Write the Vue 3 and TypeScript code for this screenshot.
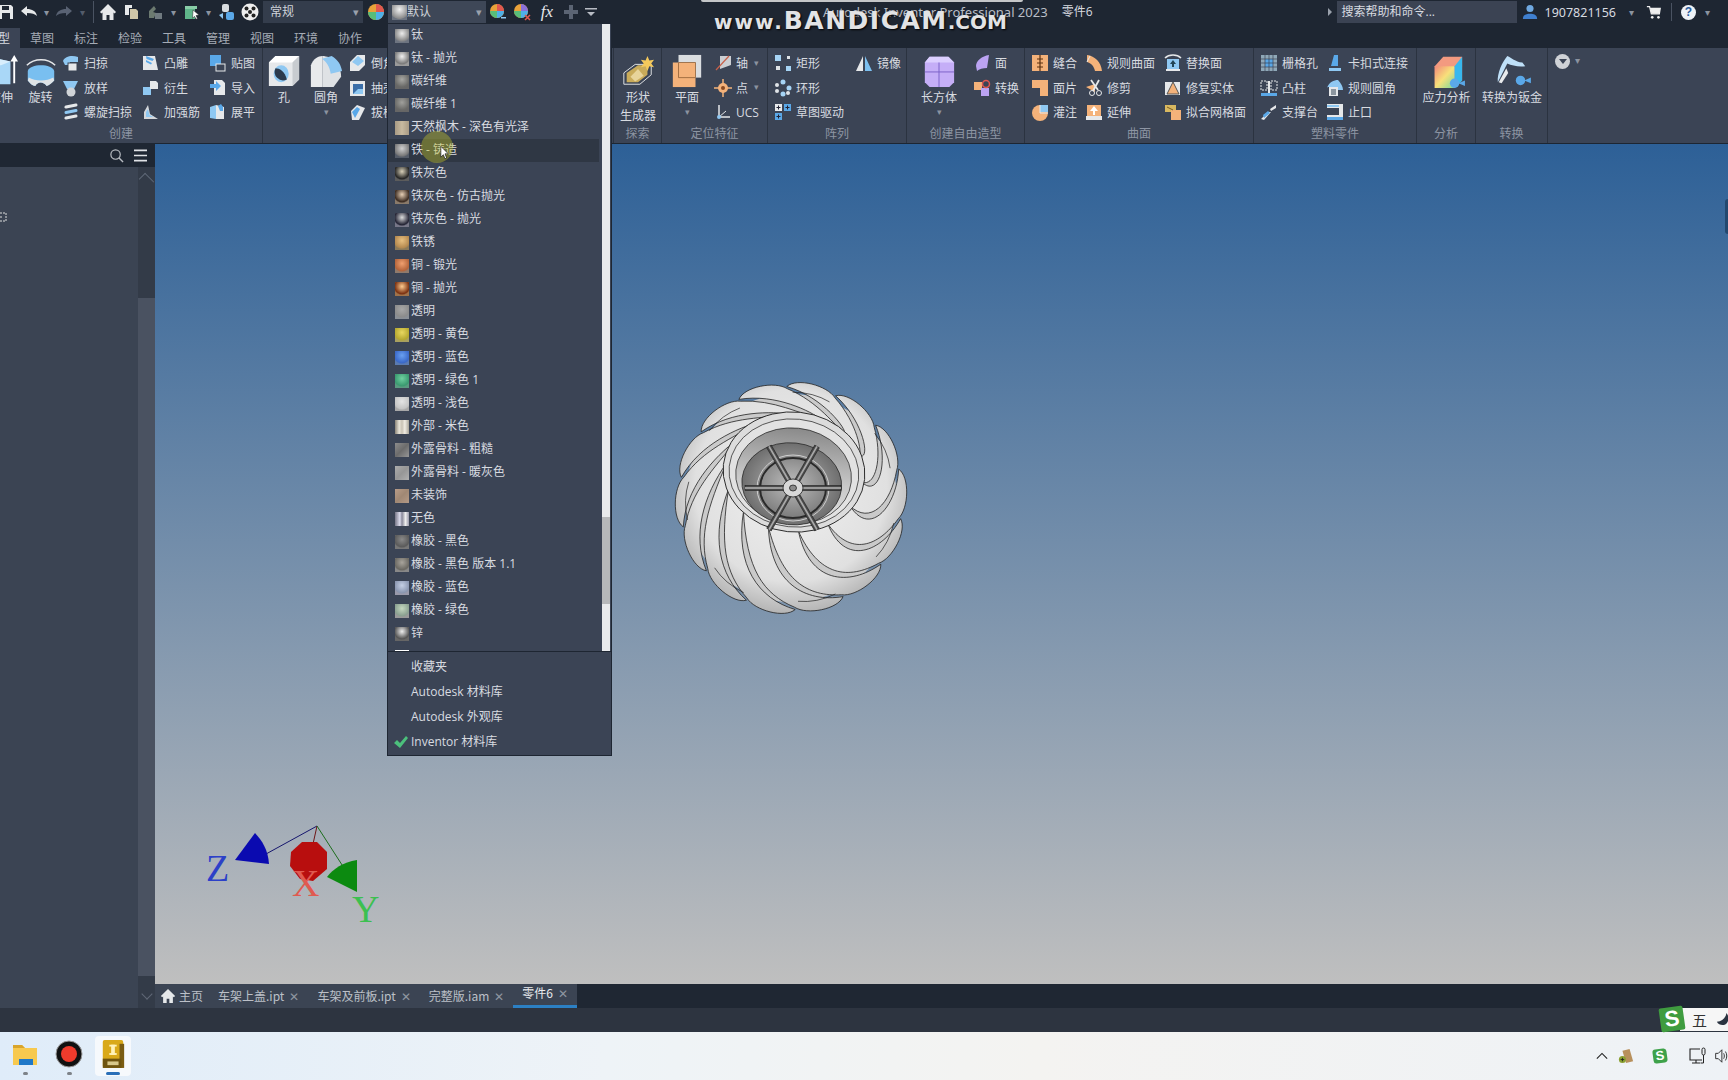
<script setup lang="ts">
import { computed } from 'vue'

type Item = { i: string; t: string; caret?: boolean }
type Col = { w: number; big?: { i: string; t: string[]; caret?: boolean }; items?: Item[]; ml?: number }
type Group = { label: string; w: number; cols: Col[]; pad?: number; labelOffset?: number }

const B = '#8fc8f2'
const W = '#e6e8ea'
const O = '#f4b27a'
const P = '#bba3f2'
const icons: Record<string, string> = {
  save: `<path d="M-4 2h14l2 2v12H-4z" fill="${W}"/><rect x="1" y="3" width="7" height="4" fill="#1f2733"/><rect x="1" y="10" width="8" height="6" fill="#1f2733"/>`,
  undo: `<path d="M1 8l6-5v3c5 0 9 2 10 7-2-2-5-3-10-3v3z" fill="${W}"/>`,
  redo: `<path d="M17 8l-6-5v3C6 6 2 8 1 13c2-2 5-3 10-3v3z" fill="#596273"/>`,
  home: `<path d="M9 1L1 9l1.400 1.400L3.500 9.500V17h4v-5h3v5h4V9.500l1.100.9L17 9z" fill="${W}"/>`,
  proj: `<path d="M2 2h7v3H6v7H2z" fill="${W}"/><path d="M7 6h6l2 2v8H7z" fill="#cfc6a8"/>`,
  upd: `<path d="M3 15V8l5-5 2 3-3 3 3 1-2 5z" fill="#6c7a70"/><path d="M9 10h7v6H9z" fill="#707a80"/>`,
  sel: `<rect x="2" y="3" width="10" height="13" fill="#5fb58a"/><path d="M2 3h12v3H2z" fill="#89cda8"/><path d="M10 7l6 5-3 .5 1.500 3-1.500.8-1.500-3-2 2z" fill="#fff" stroke="#222" stroke-width=".5"/>`,
  param: `<rect x="5" y="1" width="7" height="8" rx="2" fill="#d8dce0"/><path d="M2 12l4-2v6z" fill="#8fc8f2"/><rect x="9" y="9" width="8" height="8" rx="2" fill="#5aa8e8"/>`,
  chk: `<circle cx="9" cy="9" r="8.500" fill="#eee"/><g fill="#222"><circle cx="5.500" cy="5.500" r="2"/><circle cx="12.500" cy="5.500" r="2"/><circle cx="9" cy="9" r="2"/><circle cx="5.500" cy="12.500" r="2"/><circle cx="12.500" cy="12.500" r="2"/></g>`,
  ball: `<circle cx="9" cy="9" r="8" fill="#e9a23a"/><path d="M9 1a8 8 0 0 1 8 8H9z" fill="#e0574f"/><path d="M9 9h8a8 8 0 0 1-8 8z" fill="#4fb0e8"/><path d="M9 9v8a8 8 0 0 1-8-8z" fill="#58bd7a"/>`,
  balladd: `<circle cx="8" cy="8" r="7" fill="#e9a23a"/><path d="M8 1a7 7 0 0 1 7 7H8z" fill="#e0574f"/><path d="M8 8h7a7 7 0 0 1-7 7z" fill="#4fb0e8"/><path d="M8 8v7a7 7 0 0 1-7-7z" fill="#58bd7a"/><path d="M12 14h5v1.500h-5z" fill="#8fc8f2"/>`,
  balldel: `<circle cx="8" cy="8" r="7" fill="#e9a23a"/><path d="M8 1a7 7 0 0 1 7 7H8z" fill="#8a70d8"/><path d="M8 8h7a7 7 0 0 1-7 7z" fill="#4fb0e8"/><path d="M8 8v7a7 7 0 0 1-7-7z" fill="#58bd7a"/><path d="M12 12l5 5m0-5l-5 5" stroke="#e0574f" stroke-width="1.500"/>`,
  plus: `<path d="M7 2h4v5h5v4h-5v5H7v-5H2V7h5z" fill="#5b6473"/>`,
  more: `<path d="M3 5h12v1.500H3zM5 9h8l-4 4z" fill="#b8bcc4"/>`,
  sweep: `<path d="M1 7C3 2 10 1 16 3v5H8v3H3z" fill="${B}"/><rect x="6" y="9" width="9" height="8" fill="${W}" stroke="#3b4455"/>`,
  loft: `<path d="M1 2h15l-4 8H5z" fill="${B}"/><circle cx="9" cy="13" r="4.500" fill="#d0d4d8"/>`,
  coil: `<g stroke="${W}" stroke-width="3" fill="none" stroke-linecap="round"><path d="M4 4l10-2"/><path d="M4 9.500l10-2" stroke="${B}"/><path d="M4 15l10-2"/></g>`,
  emboss: `<path d="M1 2h12l3 14H1z" fill="${W}"/><path d="M4 2l8 3-1.500 2-6-2zM4 6l6 3-1 1.500-5-2.500z" fill="#5aa8e8"/>`,
  derive: `<rect x="1" y="8" width="8" height="8" fill="${B}"/><path d="M8 2h6l2 2v6H8z" fill="${W}"/>`,
  rib: `<path d="M2 16V9L6 2l2 9 8 5z" fill="${W}" opacity=".9"/><path d="M4 14V9l2-3 1.500 6 4 2z" fill="${B}"/>`,
  decal: `<rect x="1" y="1" width="11" height="11" fill="#5aa8e8"/><rect x="7" y="10" width="9" height="7" fill="#3b4455" stroke="${W}"/>`,
  imp: `<path d="M5 1h8l3 3v12H5z" fill="${W}"/><path d="M1 5h6V2l5 5-5 5V9H1z" fill="#5aa8e8"/>`,
  unfold: `<path d="M1 4l6-2v14l-6-1z" fill="${B}"/><path d="M7 2l8 2v12l-8 0z" fill="${W}"/><path d="M9 3l3-2 2 3v4h-3z" fill="#5aa8e8"/>`,
  chamfer: `<path d="M1 8l7-7h8v10l-6 6H1z" fill="${W}"/><path d="M3 8l6-6 6 5-6 5z" fill="${B}"/>`,
  shell: `<rect x="1" y="2" width="15" height="15" fill="${W}"/><rect x="4" y="5" width="10" height="10" fill="#3b6ea8"/><path d="M4 15l5-5h5v5z" fill="${B}"/>`,
  draft: `<path d="M2 8l6-6 8 3-6 12H3z" fill="${W}"/><path d="M3 9l5-5 3 2-5 9z" fill="#5aa8e8"/>`,
  axis: `<path d="M6 2h11v9L6 15z" fill="${W}" opacity=".85"/><path d="M15 2L2 16" stroke="#c8614a" stroke-width="1.200"/>`,
  point: `<path d="M9 0v18M0 9h18" stroke="${O}" stroke-width="1.500"/><circle cx="9" cy="9" r="5" fill="${O}"/><circle cx="9" cy="9" r="2" fill="#8a4a20"/>`,
  ucs: `<path d="M5 2v12h11" fill="none" stroke="${W}" stroke-width="1.500"/><path d="M5 14l7-6" stroke="${W}"/><circle cx="5" cy="14" r="2" fill="${B}"/>`,
  rect: `<g fill="#a6d4f5"><rect x="1" y="1" width="6" height="6"/><rect x="12" y="12" width="5" height="5"/></g><g fill="#dfe3e6"><rect x="13" y="2" width="3" height="3"/><rect x="2" y="12" width="4" height="4"/></g>`,
  ring: `<g fill="#a6d4f5"><circle cx="9" cy="3" r="2.500"/><circle cx="15" cy="9" r="2.500"/><circle cx="9" cy="15" r="2.500"/></g><g fill="#e0e4e8"><circle cx="3" cy="6" r="2"/><circle cx="3" cy="12" r="2"/><circle cx="14" cy="14" r="2"/></g>`,
  sketch: `<g fill="#e8eaec"><rect x="1" y="1" width="7" height="7"/></g><g fill="#5aa8e8"><rect x="10" y="1" width="7" height="7"/><rect x="1" y="10" width="7" height="7"/></g><path d="M4.500 2.500v4M2.500 4.500h4M13.500 2.500v4M11.500 4.500h4M4.500 11.500v4M2.500 13.500h4" stroke="#223" />`,
  mirror: `<path d="M8 2v15H1z" fill="${W}"/><path d="M10 2v15h7z" fill="#7cc0f0"/>`,
  face: `<path d="M3 12C3 7 9 2 16 1l-2 13c-4 0-8 1-10 3z" fill="${P}"/>`,
  convert: `<rect x="1" y="3" width="8" height="8" fill="${O}"/><rect x="8" y="9" width="8" height="8" fill="${P}"/><circle cx="13" cy="5" r="3.500" fill="none" stroke="#e0574f" stroke-width="1.500"/>`,
  stitch: `<rect x="1" y="1" width="16" height="16" fill="${O}"/><path d="M9 1v16M6 5h6M6 9h6M6 13h6" stroke="#5a3010" stroke-width="1.200"/>`,
  patch: `<path d="M1 1h16v16H9V9H1z" fill="${O}"/>`,
  sculpt: `<circle cx="9" cy="10" r="8" fill="${O}"/><path d="M9 2l8 0v7H9z" fill="${B}"/><path d="M9 2v8h8" fill="none" stroke="${W}"/>`,
  ruled: `<path d="M2 1c8 1 14 7 15 16h-7C9 12 6 9 2 8z" fill="${O}"/><path d="M5 2l-3 6" stroke="${W}"/>`,
  trim: `<path d="M1 8l9-3v8z" fill="${O}"/><path d="M14 1L8 12M6 1l7 10" stroke="${W}" stroke-width="1.800"/><circle cx="7" cy="14" r="2.500" fill="none" stroke="${W}"/><circle cx="14" cy="14" r="2.500" fill="none" stroke="${W}"/>`,
  extend: `<rect x="1" y="13" width="16" height="4" fill="${W}"/><rect x="2" y="2" width="14" height="11" fill="${O}"/><path d="M9 3l4 5h-3v4H8V8H5z" fill="#fff"/>`,
  replace: `<path d="M1 4c4-4 12-4 16 0" fill="none" stroke="${W}" stroke-width="1.500"/><rect x="3" y="5" width="12" height="10" fill="${B}"/><path d="M9 6l3 4h-2v3H8v-3H6z" fill="#245"/><rect x="2" y="15" width="14" height="2" fill="${W}"/>`,
  repair: `<rect x="1" y="3" width="15" height="13" fill="${W}"/><path d="M9 3l6 12H3z" fill="${O}" stroke="#555"/>`,
  mesh: `<path d="M1 2h11v7H1z" fill="#d8b860"/><path d="M7 7h10v10H7z" fill="${O}"/><path d="M3 4l6 3" stroke="#7a5a20"/>`,
  grill: `<rect x="1" y="1" width="16" height="16" fill="#8fa8b8"/><rect x="5" y="5" width="8" height="8" fill="#5aa8e8"/><path d="M1 5h16M1 9h16M1 13h16M5 1v16M9 1v16M13 1v16" stroke="#3b4455" stroke-width=".7"/>`,
  boss: `<path d="M1 2h6v9H1zM11 2h6v9h-6z" fill="none" stroke="${W}" stroke-dasharray="2 1"/><rect x="8" y="2" width="2" height="12" fill="${W}"/><rect x="1" y="14" width="16" height="3" fill="#5aa8e8"/>`,
  rest: `<path d="M1 16l7-7h3L4 17zM10 6l6-4v3l-5 3z" fill="${W}"/><path d="M3 12l5-4 2 2-6 5z" fill="#5aa8e8"/>`,
  snap: `<path d="M8 1h4v11H5z" fill="#5aa8e8"/><rect x="3" y="14" width="12" height="3" fill="${B}"/>`,
  rfillet: `<path d="M1 9C3 3 8 1 12 1c3 3 5 7 5 10h-6V8H1z" fill="${B}"/><rect x="3" y="8" width="9" height="9" fill="${W}"/><path d="M5 11h5M5 13h5M5 15h5" stroke="#345"/>`,
  lip: `<path d="M1 1h16v14H1v-3h12V5H1z" fill="${W}"/><rect x="1" y="14" width="16" height="3" fill="#5aa8e8"/><rect x="1" y="2" width="12" height="2" fill="#8fc8f2"/>`,
  extrude: `<path d="M0 10l10-6 18 4v24H0z" fill="#a9d7f7"/><path d="M0 10l10-6 18 4-10 4z" fill="#d8eefc"/><path d="M32 1l4 7h-3v23h-2V8h-3z" fill="#fff"/>`,
  revolve: `<path d="M4 18C6 10 30 10 32 18v10c-5 5-7 5-8 6-3-5-10-5-12 0-3-1-5-2-8-6z" fill="#79bff0"/><path d="M4 28c3 4 5 5 8 6 2-5 9-5 12 0 3-1 5-3 8-6l-1-3c-7 4-19 4-26 0z" fill="#dfe3e6"/><path d="M3 12c8-8 22-8 30 0" fill="none" stroke="#e6e8ea" stroke-width="1.500"/>`,
  hole: `<path d="M2 9l7-7h25v25l-7 7H2z" fill="${W}"/><path d="M9 2h25l-7 7H2z" fill="#fff"/><path d="M27 9l7-7v25l-7 7z" fill="#c8ccd0"/><ellipse cx="15" cy="21" rx="8" ry="9" fill="${B}"/><path d="M9 15c4 0 10 3 12 12A9 9 0 0 1 9 15z" fill="#2c3a4c"/>`,
  fillet: `<path d="M2 12C4 5 10 2 14 2v33H2z" fill="#e8eaec"/><path d="M14 2c10 0 20 9 20 22l-8 11H14z" fill="#dfe2e5"/><path d="M14 5l10-3c7 4 10 10 11 16l-12 3C22 13 18 8 14 5z" fill="${B}"/>`,
  shape: `<path d="M3 20l12-9h17v11L20 32H3z" fill="none" stroke="${W}"/><path d="M6 20l12-8h10v10L18 30H6z" fill="#c9ab5a"/><path d="M10 24l8-8 6 7-9 6z" fill="#e8d49a"/><path d="M28 2l2 5 5-1-3 4 3 4-5-1-2 5-2-5-5 1 3-4-3-4 5 1z" fill="#f4c95c"/>`,
  plane: `<rect x="9" y="1" width="24" height="24" fill="#dadde0"/><rect x="3" y="9" width="24" height="26" fill="${O}"/><path d="M9 9h18v16H9z" fill="none" stroke="#8a5a30" stroke-width=".8"/>`,
  box: `<path d="M8 3h20l6 6v21l-5 5H8l-5-5V9z" fill="#c5aef7"/><path d="M3 9l5-6h20l6 6z" fill="#dccfff"/><path d="M3 19h31M18 9v26" stroke="#7a60c8"/>`,
  stress: `<path d="M5 13L14 3h20v25l-8 8H5z" fill="#f39a80"/><path d="M5 13h21v23H5z" fill="url(#stressG)"/><path d="M26 13l8-10v25l-8 8z" fill="#38b8ee"/><circle cx="26" cy="31" r="5" fill="#5aa8e8"/><path d="M30 31l7-3v6z" fill="#5aa8e8"/>`,
  sheet: `<path d="M3 30C2 20 8 8 13 2c5 2 8 6 16 7l3 4c-8 1-14-1-19-3z" fill="#bfe0f8"/><path d="M4 30l8-15 2 5-7 11z" fill="#e8eaec"/><circle cx="27" cy="28" r="5" fill="#5aa8e8"/><path d="M31 28l7-3v6z" fill="#5aa8e8"/>`,
}

const qat: { i?: string; w: number; kind?: string; text?: string }[] = [
  { i: 'save', w: 19 }, { i: 'undo', w: 20 }, { kind: 'caret', w: 14 }, { i: 'redo', w: 22 }, { kind: 'caretDim', w: 15 },
  { kind: 'sep', w: 7 }, { i: 'home', w: 22 }, { kind: 'gap', w: 2 }, { i: 'proj', w: 22 }, { kind: 'gap', w: 1 }, { i: 'upd', w: 22 }, { kind: 'caret', w: 14 },
  { kind: 'gap', w: 1 }, { i: 'sel', w: 22 }, { kind: 'caret', w: 11 }, { kind: 'gap', w: 1 }, { i: 'param', w: 22 }, { kind: 'gap', w: 2 }, { i: 'chk', w: 22 }, { kind: 'gap', w: 2 },
  { kind: 'dd', w: 100, text: '常规' }, { i: 'ball', w: 25 },
]
const qatEnd = [{ i: 'balladd', w: 24 }, { i: 'balldel', w: 24 }]

const tabs = ['草图', '标注', '检验', '工具', '管理', '视图', '环境', '协作', 'F']

const col3 = (w: number, a: Item, b?: Item, c?: Item): Col => ({ w, items: [a, b, c].filter(Boolean) as Item[] })
const groups: Group[] = [
  { label: '创建', w: 263, labelOffset: 109, cols: [
    { w: 40, ml: -19, big: { i: 'extrude', t: ['拉伸'] } },
    { w: 39, big: { i: 'revolve', t: ['旋转'] } },
    col3(80, { i: 'sweep', t: '扫掠' }, { i: 'loft', t: '放样' }, { i: 'coil', t: '螺旋扫掠' }),
    col3(67, { i: 'emboss', t: '凸雕' }, { i: 'derive', t: '衍生' }, { i: 'rib', t: '加强筋' }),
    col3(56, { i: 'decal', t: '贴图' }, { i: 'imp', t: '导入' }, { i: 'unfold', t: '展平' }),
  ] },
  { label: '', w: 351, cols: [
    { w: 42, big: { i: 'hole', t: ['孔'] } },
    { w: 42, big: { i: 'fillet', t: ['圆角'], caret: true } },
    col3(80, { i: 'chamfer', t: '倒角' }, { i: 'shell', t: '抽壳' }, { i: 'draft', t: '拔模' }),
  ] },
  { label: '探索', w: 48, cols: [{ w: 48, big: { i: 'shape', t: ['形状', '生成器'] } }] },
  { label: '定位特征', w: 106, cols: [
    { w: 50, big: { i: 'plane', t: ['平面'], caret: true } },
    col3(56, { i: 'axis', t: '轴', caret: true }, { i: 'point', t: '点', caret: true }, { i: 'ucs', t: 'UCS' }),
  ] },
  { label: '阵列', w: 139, pad: 4, cols: [
    col3(81, { i: 'rect', t: '矩形' }, { i: 'ring', t: '环形' }, { i: 'sketch', t: '草图驱动' }),
    col3(54, { i: 'mirror', t: '镜像' }),
  ] },
  { label: '创建自由造型', w: 118, cols: [
    { w: 64, big: { i: 'box', t: ['长方体'], caret: true } },
    col3(54, { i: 'face', t: '面' }, { i: 'convert', t: '转换' }),
  ] },
  { label: '曲面', w: 229, pad: 4, cols: [
    col3(54, { i: 'stitch', t: '缝合' }, { i: 'patch', t: '面片' }, { i: 'sculpt', t: '灌注' }),
    col3(79, { i: 'ruled', t: '规则曲面' }, { i: 'trim', t: '修剪' }, { i: 'extend', t: '延伸' }),
    col3(90, { i: 'replace', t: '替换面' }, { i: 'repair', t: '修复实体' }, { i: 'mesh', t: '拟合网格面' }),
  ] },
  { label: '塑料零件', w: 163, pad: 4, cols: [
    col3(66, { i: 'grill', t: '栅格孔' }, { i: 'boss', t: '凸柱' }, { i: 'rest', t: '支撑台' }),
    col3(92, { i: 'snap', t: '卡扣式连接' }, { i: 'rfillet', t: '规则圆角' }, { i: 'lip', t: '止口' }),
  ] },
  { label: '分析', w: 59, cols: [{ w: 59, big: { i: 'stress', t: ['应力分析'] } }] },
  { label: '转换', w: 72, cols: [{ w: 72, big: { i: 'sheet', t: ['转换为钣金'] } }] },
]

type Mat = { n: string; a: string; b: string; bg: string; flat?: string; hover?: boolean }
const m = (n: string, a: string, b: string, bg: string, flat?: string): Mat => ({ n, a, b, bg, flat })
const mats: Mat[] = [
  m('钛', '#ececec', '#8a8a8a', '#6d7480'),
  m('钛 - 抛光', '#f2f2f2', '#7a7a7a', '#9a9a9a'),
  m('碳纤维', '#a8a8a4', '#6a6a68', '#666'),
  m('碳纤维 1', '#a0a09c', '#6a6a68', '#666'),
  m('天然枫木 - 深色有光泽', '', '', '', 'linear-gradient(90deg,#a89a84,#c8baa0,#a89a84)'),
  { ...m('铁 - 铸造', '#cfcfcf', '#7a7a7a', '#555c68'), hover: true },
  m('铁灰色', '#d8d0b8', '#242424', '#5c5c5c'),
  m('铁灰色 - 仿古抛光', '#e6cfb5', '#3a2a20', '#8a7a6a'),
  m('铁灰色 - 抛光', '#dddddd', '#223', '#778'),
  m('铁锈', '#e8c080', '#b58a50', '#8c7a58'),
  m('铜 - 锻光', '#f0a070', '#b5643a', '#8f7a6c'),
  m('铜 - 抛光', '#ffcc90', '#7a3010', '#a0724a'),
  m('透明', '#a8a8a8', '#8c8c8c', '#8a8f96'),
  m('透明 - 黄色', '#e8d860', '#b5a830', '#a8a060'),
  m('透明 - 蓝色', '#6aa0f0', '#3a68c8', '#5a7ab0'),
  m('透明 - 绿色 1', '#70d0a0', '#3a9a70', '#5a9a80'),
  m('透明 - 浅色', '#e4e4e4', '#c4c4c4', '#a8a8a8'),
  m('外部 - 米色', '', '', '', 'linear-gradient(90deg,#8a8478,#e8e4d8 30%,#c8c2b4 50%,#f0ece2 70%,#a8a498)'),
  m('外露骨料 - 粗糙', '', '', '', 'linear-gradient(135deg,#8c8c8c,#6c6c6c,#969696)'),
  m('外露骨料 - 暖灰色', '', '', '', 'linear-gradient(135deg,#acacac,#969696,#b0b0b0)'),
  m('未装饰', '', '', '', 'linear-gradient(135deg,#b89c88,#a08874,#b49a86)'),
  m('无色', '', '', '', 'linear-gradient(90deg,#778,#dde 35%,#889 50%,#eee 75%,#99a)'),
  m('橡胶 - 黑色', '#8a8a8a', '#5a5a5a', '#777'),
  m('橡胶 - 黑色 版本 1.1', '#a8a49c', '#6a6862', '#888'),
  m('橡胶 - 蓝色', '#c5d0e5', '#8a96b0', '#99a'),
  m('橡胶 - 绿色', '#c5d8c0', '#8aa090', '#999'),
  m('锌', '#eeeeee', '#555', '#666'),
  m('', '', '', '', 'linear-gradient(#fff,#fff)'),
]
const swatch = (x: Mat) =>
  x.flat ? { background: x.flat } : { background: `radial-gradient(circle at 50% 32%, ${x.a}, ${x.b} 62%, ${x.bg} 74%)` }

const libs = [
  { n: '收藏夹' }, { n: 'Autodesk 材料库' }, { n: 'Autodesk 外观库' }, { n: 'Inventor 材料库', on: true },
]
const docs = [
  { n: '车架上盖.ipt' }, { n: '车架及前板.ipt' }, { n: '完整版.iam' }, { n: '零件6', on: true },
]

// wheel geometry, computed in screen units around the wheel's own centre
const C = { x: 130, y: 122 }
const H = { x: 133, y: 96, rx: 68, ry: 58 }
const pol = (r: number, deg: number) => {
  const a = (deg * Math.PI) / 180
  return `${(C.x + r * Math.cos(a)).toFixed(1)} ${(C.y + r * Math.sin(a)).toFixed(1)}`
}
const hub = (deg: number) => {
  const a = (deg * Math.PI) / 180
  return `${(H.x + H.rx * Math.cos(a)).toFixed(1)} ${(H.y + H.ry * Math.sin(a)).toFixed(1)}`
}
const blades = computed(() => {
  const N = 14
  const R = 115
  return Array.from({ length: N }, (_, i) => {
    const t = 35 + (i * 360) / N
    return {
      d: `M${hub(t)} C${pol(88, t - 8)} ${pol(106, t - 30)} ${pol(R * 0.97, t - 50)} C${pol(R * 1.05, t - 45)} ${pol(R * 1.03, t - 30)} ${pol(R * 0.95, t - 24)} C${pol(100, t - 6)} ${pol(84, t + 10)} ${hub(t + 26)} Z`,
      cap: i % 2 ? `M${pol(R * 0.9, t - 26)} Q${pol(R * 0.94, t - 36)} ${pol(R * 0.92, t - 47)}` : '',
    }
  })
})
const spokes = [0, 60, 120, 180, 240, 300]
</script>

<template>
  <div class="app">
    <!-- title bar -->
    <header class="titlebar">
      <template v-for="(q, k) in qat" :key="k">
        <span v-if="q.kind === 'gap'" class="cell" :style="{ width: q.w + 'px' }"></span>
        <span v-else-if="q.kind === 'sep'" class="cell" :style="{ width: q.w + 'px' }"><i class="vsep"></i></span>
        <span v-else-if="q.kind === 'caret'" class="cell caret" :style="{ width: q.w + 'px' }">▾</span>
        <span v-else-if="q.kind === 'caretDim'" class="cell caret dim" :style="{ width: q.w + 'px' }">▾</span>
        <span v-else-if="q.kind === 'dd'" class="combo" :style="{ width: q.w + 'px' }">{{ q.text }}<b>▾</b></span>
        <span v-else class="cell" :style="{ width: q.w + 'px' }"><svg class="qi" viewBox="0 0 18 18" v-html="icons[q.i!]"></svg></span>
      </template>
      <span class="combo combo2">
        <i class="combo-ball"></i>默认<b>▾</b>
      </span>
      <span v-for="q in qatEnd" :key="q.i" class="cell" :style="{ width: q.w + 'px' }"><svg class="qi" viewBox="0 0 18 18" v-html="icons[q.i]"></svg></span>
      <span class="fx">fx</span>
      <span class="cell plus"><svg class="qi" viewBox="0 0 18 18" v-html="icons.plus"></svg></span>
      <span class="cell more"><svg class="qi" viewBox="0 0 18 18" v-html="icons.more"></svg></span>

      <span class="apptitle">Autodesk Inventor Professional 2023</span>
      <span class="docname">零件6</span>

      <div class="rightbar">
        <i class="tri"></i>
        <span class="search">搜索帮助和命令...</span>
        <svg class="user" viewBox="0 0 18 18"><circle cx="9" cy="5" r="4" fill="#6fa8e0" /><path d="M1 17c0-5 4-6 8-6s8 1 8 6z" fill="#3f7fcf" /></svg>
        <span class="uid">1907821156</span>
        <span class="caret c1">▾</span>
        <svg class="cart" viewBox="0 0 18 18"><path d="M1 3h3l2 8h9l1-6H5" fill="none" stroke="#eee" stroke-width="1.400" /><path d="M5 5h11l-1 6H6z" fill="#eee" /><circle cx="7" cy="15" r="1.500" fill="#eee" /><circle cx="14" cy="15" r="1.500" fill="#eee" /></svg>
        <i class="vsep sep2"></i>
        <span class="help">?</span>
        <span class="caret c2">▾</span>
      </div>
    </header>

    <!-- ribbon tabs -->
    <nav class="tabs">
      <span class="tab active">型</span>
      <span v-for="t in tabs" :key="t" class="tab">{{ t }}</span>
    </nav>

    <!-- ribbon -->
    <section class="ribbon">
      <div v-for="g in groups" :key="g.label + g.w" class="group" :style="{ width: g.w + 'px' }">
        <div class="gbody" :style="{ paddingLeft: (g.pad || 0) + 'px' }">
          <div v-for="(c, ci) in g.cols" :key="ci" class="col" :style="{ width: c.w + 'px', marginLeft: (c.ml || 0) + 'px' }">
            <div v-if="c.big" class="big">
              <svg class="bigi" viewBox="0 0 36 36" v-html="icons[c.big.i]"></svg>
              <span v-for="l in c.big.t" :key="l" class="bigt">{{ l }}</span>
              <span v-if="c.big.caret" class="bigc">▾</span>
            </div>
            <template v-else>
              <div v-for="it in c.items" :key="it.t" class="it">
                <svg class="iti" viewBox="0 0 18 18" v-html="icons[it.i]"></svg>
                <span class="itt">{{ it.t }}</span>
                <span v-if="it.caret" class="itc">▾</span>
              </div>
            </template>
          </div>
        </div>
        <div class="glabel" :style="g.labelOffset ? { paddingLeft: g.labelOffset + 'px', textAlign: 'left' } : {}">{{ g.label }}</div>
      </div>
      <div class="rib-end">
        <span class="rib-circle"><i></i></span>
        <span class="caret">▾</span>
      </div>
    </section>

    <!-- main -->
    <main class="main">
      <aside class="panel">
        <div class="phead">
          <svg class="psearch" viewBox="0 0 16 16"><circle cx="7" cy="7" r="5" fill="none" stroke="#b8bcc2" stroke-width="1.300" /><path d="M10.500 10.500L15 15" stroke="#b8bcc2" stroke-width="1.500" /></svg>
          <svg class="pmenu" viewBox="0 0 16 14"><path d="M1 1.500h14M1 7h14M1 12.500h14" stroke="#e0e2e6" stroke-width="1.800" /></svg>
        </div>
        <div class="pbody">
          <div class="ptree"><svg class="pnode" viewBox="0 0 8 10"><path d="M-3 1h9v8h-9M-3 5h6" fill="none" stroke="#ddd" stroke-dasharray="2 1" /></svg></div>
          <div class="pscroll">
            <span class="parrow up"></span>
            <span class="pthumb"></span>
            <span class="parrow down"></span>
          </div>
        </div>
      </aside>

      <div class="viewcol">
        <div class="viewport">
          <span class="navsmudge"></span>
          <svg class="wheel" viewBox="0 0 260 244" width="260" height="244">
            <defs>
              <radialGradient id="bladeG" gradientUnits="userSpaceOnUse" cx="130" cy="110" r="128">
                <stop offset="0" stop-color="#f0f0f0" />
                <stop offset=".75" stop-color="#e0e0e0" />
                <stop offset="1" stop-color="#b4b4b4" />
              </radialGradient>
              <linearGradient id="wellG" x1="0" y1="0" x2="0" y2="1">
                <stop offset="0" stop-color="#8a8a8a" />
                <stop offset=".55" stop-color="#c8c8c8" />
                <stop offset="1" stop-color="#e4e4e4" />
              </linearGradient>
              <radialGradient id="deepG">
                <stop offset="0" stop-color="#bdbdbd" />
                <stop offset="1" stop-color="#6e6e6e" />
              </radialGradient>
              <linearGradient id="stressG" x1="0" y1="0" x2="1" y2="1">
                <stop offset="0" stop-color="#f28a7a" />
                <stop offset=".5" stop-color="#f8e07a" />
                <stop offset="1" stop-color="#7ad89a" />
              </linearGradient>
            </defs>
            <ellipse cx="130" cy="122" rx="106" ry="104" fill="#cacaca" />
            <g v-for="(b, k) in blades" :key="k">
              <path :d="b.d" fill="url(#bladeG)" stroke="#222" stroke-width=".8" />
              <path v-if="b.cap" :d="b.cap" fill="none" stroke="#222" stroke-width=".7" />
            </g>
            <g transform="rotate(6 133 96)">
              <ellipse cx="133" cy="96" rx="71" ry="60" fill="#dcdcdc" stroke="#222" stroke-width=".9" />
              <ellipse cx="133" cy="97" rx="65" ry="54" fill="#e2e2e2" stroke="#222" stroke-width=".7" />
              <ellipse cx="133" cy="100" rx="58" ry="48" fill="url(#wellG)" stroke="#222" stroke-width=".7" />
              <ellipse cx="132" cy="108" rx="50" ry="41" fill="url(#deepG)" stroke="#222" stroke-width=".7" />
            </g>
            <ellipse cx="132" cy="112" rx="33" ry="30" fill="none" stroke="#2a2a2a" stroke-width="2" />
            <ellipse cx="132" cy="112" rx="36" ry="33" fill="none" stroke="#cfcfcf" stroke-width="1" />
            <g v-for="s in spokes" :key="s" :transform="`translate(132 112) rotate(${s}) scale(1 .88)`">
              <rect x="6" y="-3" width="42" height="6" fill="#4a4a4a" stroke="#111" stroke-width=".5" />
              <rect x="6" y="-1" width="42" height="2" fill="#a8a8a8" />
            </g>
            <ellipse cx="132" cy="112" rx="10" ry="9" fill="#d8d8d8" stroke="#222" stroke-width=".8" />
            <ellipse cx="132" cy="112" rx="3.500" ry="3" fill="#8a8a8a" stroke="#222" stroke-width=".8" />
          </svg>

          <div class="triad">
            <svg viewBox="0 0 160 120" width="160" height="120">
              <path d="M107 17L56 45" stroke="#16166e" stroke-width="1" />
              <path d="M107 17l-4 18" stroke="#6e1616" stroke-width="1" />
              <path d="M107 17l27 42" stroke="#1d6e1d" stroke-width="1" />
              <path d="M45 24L25 51 59 55C58 40 52 32 45 24z" fill="#0a0ab0" />
              <path d="M92 33l15 0 10 10 0 17-14 12-13-2-10-13 1-14z" fill="#b80e0e" />
              <path d="M117 68l30 15V51c-14 2-24 9-30 17z" fill="#0c8a10" />
              <text x="-4" y="72" class="ax" fill="#2c40c8">Z</text>
              <text x="82" y="87" class="ax" fill="#e05a50">X</text>
              <text x="142" y="113" class="ax" fill="#3cc050">Y</text>
            </svg>
          </div>
        </div>

        <div class="doctabs">
          <div class="doc home">
            <svg class="homei" viewBox="0 0 18 18" v-html="icons.home"></svg>
            <span>主页</span>
          </div>
          <div v-for="d in docs" :key="d.n" class="doc" :class="{ on: d.on }">
            <span>{{ d.n }}</span><span class="x">✕</span>
          </div>
          <div class="docfill"></div>
        </div>
      </div>
    </main>

    <div class="status"></div>

    <!-- taskbar -->
    <footer class="taskbar">
      <div class="tb-app">
        <svg viewBox="0 0 28 28" width="28" height="28"><path d="M2 5h9l3 3h12v17H2z" fill="#f7c94f" /><path d="M2 5h9l3 3H2z" fill="#d9a52c" /><rect x="8" y="19" width="14" height="6" fill="#1f78c8" /></svg>
        <i class="dot"></i>
      </div>
      <div class="tb-app">
        <svg viewBox="0 0 28 28" width="28" height="28"><circle cx="14" cy="14" r="13" fill="#111" stroke="#999" /><circle cx="14" cy="14" r="8" fill="#ef3b2c" /></svg>
        <i class="dot"></i>
      </div>
      <div class="tb-app on">
        <svg viewBox="0 0 28 32" width="26" height="30"><rect x="3" y="1" width="22" height="30" rx="2" fill="#d9a91a" /><rect x="21" y="5" width="5" height="26" fill="#7a5c12" /><rect x="3" y="21" width="20" height="10" fill="#6e5410" /><rect x="12" y="6" width="4" height="11" fill="#fff2b8" /><rect x="10" y="6" width="8" height="2" fill="#fff2b8" /><rect x="10" y="15" width="8" height="2" fill="#fff2b8" /><rect x="8" y="24" width="12" height="4" fill="#d8c88a" /></svg>
        <i class="dot blue"></i>
      </div>
      <div class="tray">
        <svg class="tr up" viewBox="0 0 14 8"><path d="M1 7l6-6 6 6" fill="none" stroke="#222" stroke-width="1.300" /></svg>
        <svg class="tr pk" viewBox="0 0 18 18"><path d="M5 3l8-2 4 14-8 2z" fill="#b8905c" /><circle cx="5" cy="13" r="4" fill="#8aa030" /><path d="M3 13h4M5 11v4" stroke="#222" /></svg>
        <span class="s-tray">S</span>
        <svg class="tr net" viewBox="0 0 18 18"><path d="M11 2H1v11h12M3 16h8M7 13v3" fill="none" stroke="#222" stroke-width="1.100" /><rect x="13" y="1" width="3" height="7" rx="1.500" fill="none" stroke="#222" /><path d="M14.500 8v8h-3" fill="none" stroke="#222" /></svg>
        <svg class="tr snd" viewBox="0 0 14 18"><path d="M1 6h3l4-4v14l-4-4H1zM10 6c1 2 1 4 0 6M12 4c2 3 2 7 0 10" fill="none" stroke="#222" /></svg>
      </div>
    </footer>

    <!-- overlays -->
    <div class="menu">
      <div class="mlist">
        <div v-for="(x, k) in mats" :key="k" class="mrow" :class="{ hover: x.hover }">
          <i class="sw" :style="swatch(x)"></i><span>{{ x.n }}</span>
        </div>
        <div class="mscroll"><span></span></div>
      </div>
      <div class="mlibs">
        <div v-for="l in libs" :key="l.n" class="lib">
          <svg v-if="l.on" class="tick" viewBox="0 0 16 14"><path d="M1 8l3-3 3 3 6-7 2 2-8 10z" fill="#4cc07c" /></svg>
          <span>{{ l.n }}</span>
        </div>
      </div>
    </div>

    <i class="spot"></i>
    <svg class="cursor" viewBox="0 0 12 18"><path d="M1 1v13l3-3 2 5 2-1-2-5h4z" fill="#fff" stroke="#111" stroke-width=".8" /></svg>

    <div class="topgrey"></div>
    <div class="watermark"><span class="wm-a">www.</span><span class="wm-b">BANDICAM</span><span class="wm-c">.COM</span></div>

    <div class="ime">
      <span class="ime-s">S</span>
      <span class="ime-t">五</span>
      <svg class="moon" viewBox="0 0 16 16"><path d="M12 1c-1 6-5 10-11 10 2 4 8 5 11 2 3-3 3-8 0-12z" fill="#2a3340" /></svg>
    </div>
  </div>
</template>

<style>
html, body { margin: 0; overflow: hidden; background: #1f2733; }
</style>

<style scoped>
.app {
  position: relative; width: 1728px; height: 1080px; overflow: hidden;
  display: flex; flex-direction: column; background: #1f2733; color: #d8dbe0;
  font: 12px/1.2 "Open Sans", "Noto Sans CJK SC", sans-serif;
}
.titlebar { height: 28px; flex: none; display: flex; align-items: center; background: #1e2632; padding-bottom: 4px; box-sizing: border-box; }
.cell { display: flex; align-items: center; justify-content: center; flex: none; height: 22px; overflow: visible; }
.qi { width: 18px; height: 18px; display: block; overflow: visible; }
.caret { color: #8b93a0; font-size: 10px; }
.caret.dim { color: #535c6b; }
.vsep { display: block; width: 1px; height: 22px; background: #4a5362; }
.combo { flex: none; display: flex; align-items: center; height: 22px; padding: 0 4px 0 7px; box-sizing: border-box; background: #343d4c; color: #cfd3d9; font-size: 12px; }
.combo b { margin-left: auto; font-weight: 400; color: #9aa1ac; font-size: 11px; }
.combo2 { width: 98px; background: #3e4757; padding-left: 4px; }
.combo-ball { width: 15px; height: 15px; background: radial-gradient(circle at 50% 30%, #f2f2f2, #8a8a8a 70%, #6d7480 75%); }
.fx { flex: none; width: 26px; text-align: center; font: italic 17px "Liberation Serif", serif; color: #e6e8ea; }
.plus { width: 21px; }
.more { width: 20px; }
.apptitle { margin-left: 222px; flex: none; font: 13px "Noto Sans", sans-serif; color: #b9bec6; white-space: nowrap; }
.docname { margin-left: 14px; flex: none; color: #d8dbe0; font-size: 12px; }
.rightbar { margin-left: auto; display: flex; align-items: center; height: 22px; padding-right: 18px; }
.tri { width: 0; height: 0; border-left: 4px solid #9aa1ac; border-top: 4px solid transparent; border-bottom: 4px solid transparent; margin-right: 5px; }
.search { width: 180px; height: 22px; line-height: 22px; padding-left: 4px; box-sizing: border-box; background: #3b4353; color: #d8dbe0; }
.user { width: 16px; height: 16px; margin: 0 6px 0 5px; }
.uid { font: 12.500px "Noto Sans", sans-serif; color: #d8dbe0; }
.c1 { margin-left: 13px; }
.cart { width: 16px; height: 16px; margin-left: 12px; }
.sep2 { margin: 0 9px 0 9px; height: 18px; }
.help { width: 15px; height: 15px; border-radius: 50%; background: #eef2f6; color: #2b5d9c; font: bold 12px/15px "Liberation Sans", sans-serif; text-align: center; }
.c2 { margin-left: 9px; }

.tabs { height: 20px; flex: none; display: flex; align-items: stretch; background: #1e2632; overflow: hidden; }
.tab { width: 44px; flex: none; text-align: center; line-height: 22px; color: #a6acb6; font-size: 12px; }
.tab.active { width: 20px; text-align: left; text-indent: -2px; background: #3b4455; color: #d8dbe0; }

.ribbon { height: 95px; flex: none; display: flex; background: #3b4455; border-bottom: 1px solid #1c2430; box-sizing: content-box; overflow: hidden; }
.group { flex: none; display: flex; flex-direction: column; box-sizing: border-box; border-right: 1px solid #2b3340; }
.gbody { flex: 1; display: flex; min-height: 0; padding-top: 3px; }
.col { flex: none; box-sizing: border-box; }
.glabel { height: 20px; line-height: 22px; text-align: center; color: #8d95a3; font-size: 12px; }
.it { height: 24.500px; display: flex; align-items: center; padding-left: 2px; white-space: nowrap; color: #d8dbe0; }
.itt { padding-top: 2px; }
.iti { width: 18px; height: 18px; flex: none; margin-right: 4px; overflow: visible; }
.itc { margin-left: 6px; color: #8b93a0; font-size: 9px; }
.big { display: flex; flex-direction: column; align-items: center; padding-top: 3px; }
.bigi { width: 34px; height: 34px; flex: none; margin-bottom: 1px; overflow: visible; }
.bigt { line-height: 18px; white-space: nowrap; color: #d8dbe0; }
.bigc { color: #8b93a0; font-size: 9px; line-height: 10px; }
.rib-end { display: flex; align-items: flex-start; gap: 5px; padding: 6px 0 0 7px; }
.rib-circle { width: 15px; height: 15px; border-radius: 50%; background: #cfd2d6; display: flex; align-items: center; justify-content: center; }
.rib-circle i { width: 0; height: 0; border-top: 5px solid #3b4455; border-left: 4px solid transparent; border-right: 4px solid transparent; }

.main { flex: none; height: 865px; display: flex; margin-top: -1px; }
.panel { width: 155px; flex: none; display: flex; flex-direction: column; background: #3b4453; }
.phead { height: 24px; flex: none; background: #1f2733; display: flex; align-items: center; justify-content: flex-end; gap: 9px; padding-right: 7px; box-sizing: border-box; }
.psearch { width: 15px; height: 15px; }
.pmenu { width: 15px; height: 13px; }
.pbody { flex: 1; display: flex; min-height: 0; }
.ptree { flex: 1; padding-top: 45px; }
.pnode { width: 8px; height: 10px; display: block; overflow: hidden; }
.pscroll { width: 17px; background: #333b48; display: flex; flex-direction: column; align-items: center; }
.parrow { width: 7px; height: 7px; flex: none; border-left: 1.500px solid #5f6877; border-top: 1.500px solid #5f6877; }
.parrow.up { transform: rotate(45deg); margin: 9px 0 10px; }
.parrow.down { transform: rotate(225deg); margin: 14px 0 7px; }
.pthumb { flex: none; width: 17px; height: 678px; margin-top: 103px; background: #4a5261; }

.viewcol { flex: 1; display: flex; flex-direction: column; min-width: 0; }
.viewport { flex: 1; position: relative; background: linear-gradient(#2d6097, #bfbfbf); border-top: 1px solid #1d2632; }
.wheel { position: absolute; left: 506px; top: 232px; overflow: visible; }
.triad { position: absolute; left: 55px; top: 665px; }
.triad svg { overflow: visible; }
.ax { font: 38px "Liberation Serif", serif; }
.navsmudge { position: absolute; right: 0; top: 55px; width: 3px; height: 35px; background: #23486f; border-radius: 3px 0 0 3px; }

.doctabs { height: 24px; flex: none; display: flex; background: #1f2733; }
.doc { flex: none; display: flex; align-items: center; padding: 0 9px; background: #3b4453; color: #bcc0c8; height: 24px; box-sizing: border-box; white-space: nowrap; font-family: "Noto Sans CJK SC", sans-serif; }
.doc.home { padding: 0 6px 0 5px; width: 54px; gap: 3px; }
.homei { width: 16px; height: 16px; flex: none; }
.x { margin-left: 5px; width: 10px; text-align: center; font-size: 12px; color: #8f96a2; }
.doc.on { color: #e8eaee; border-bottom: 3px solid #2c80c4; padding-bottom: 3px; }
.docfill { flex: 1; }

.status { height: 24px; flex: none; background: #2d3440; }
.taskbar { height: 48px; flex: none; display: flex; align-items: center; background: linear-gradient(90deg, #dfecf9, #eef3f7 35%, #f4f3f1 60%, #eef2f6); padding-left: 7px; box-sizing: border-box; position: relative; }
.tb-app { position: relative; flex: none; width: 36px; height: 40px; margin-right: 8px; display: flex; align-items: center; justify-content: center; border-radius: 4px; padding-bottom: 4px; box-sizing: border-box; }
.tb-app.on { background: #f6f9fc; }
.dot { position: absolute; bottom: 1px; left: 50%; margin-left: -2px; width: 5px; height: 3px; border-radius: 2px; background: #7d8288; }
.dot.blue { width: 14px; margin-left: -7px; background: #2a6fb8; }
.tray { margin-left: auto; display: flex; align-items: center; height: 100%; }
.tr { flex: none; }
.up { width: 12px; height: 8px; }
.pk { width: 16px; height: 16px; margin-left: 10px; }
.s-tray { width: 14px; height: 14px; margin-left: 19px; background: #3ea24a; color: #fff; border-radius: 3px; text-align: center; font: bold 13px/14px "Liberation Sans", sans-serif; transform: rotate(-8deg); }
.net { width: 18px; height: 18px; margin-left: 22px; }
.snd { width: 14px; height: 16px; margin-left: 7px; }

.menu { position: absolute; left: 387px; top: 23px; width: 225px; height: 733px; background: #3b4455; border: 1px solid #1e2632; box-sizing: border-box; display: flex; flex-direction: column; }
.mlist { position: relative; height: 627px; flex: none; overflow: hidden; border-bottom: 1px solid #1e2632; }
.mrow { height: 23px; display: flex; align-items: center; padding-left: 7px; color: #d8dbe0; white-space: nowrap; margin-right: 12px; }
.mrow.hover { background: #2f3744; }
.sw { width: 14px; height: 14px; flex: none; margin-right: 2px; }
.mscroll { position: absolute; right: 1px; top: 0; bottom: 0; width: 8px; background: #e8eaec; }
.mscroll span { position: absolute; left: 0; right: 0; top: 493px; height: 87px; background: #b6b8ba; }
.mlibs { flex: 1; padding-top: 2px; }
.lib { position: relative; height: 25px; line-height: 25px; padding-left: 23px; color: #d8dbe0; }
.tick { position: absolute; left: 5px; top: 6px; width: 16px; height: 14px; }
.spot { position: absolute; left: 421px; top: 131px; width: 32px; height: 32px; border-radius: 50%; background: rgba(190, 190, 40, .42); }
.cursor { position: absolute; left: 440px; top: 145px; width: 10px; height: 16px; }
.topgrey { position: absolute; left: 701px; top: 0; width: 322px; height: 2px; background: #c4c6c8; border-radius: 0 0 3px 3px; }
.watermark { position: absolute; left: 714px; top: 6px; height: 30px; display: flex; align-items: baseline; font-family: "DejaVu Sans", sans-serif; font-weight: 700; color: #e2e3e5; text-shadow: 1px 1px 2px #000; white-space: nowrap; }
.wm-a { font-size: 20px; letter-spacing: 2px; }
.wm-b { font-size: 25px; letter-spacing: 1.500px; }
.wm-c { font-size: 20px; }
.ime { position: absolute; right: 0; top: 1007px; width: 60px; height: 25px; display: flex; align-items: center; }
.ime-s { position: absolute; left: -8px; top: 0; width: 24px; height: 24px; background: #3f9c3f; color: #fff; text-align: center; font: bold 22px/24px "Liberation Sans", sans-serif; transform: rotate(-8deg); border-radius: 2px; z-index: 1; }
.ime-t { margin-left: 12px; width: 48px; padding-left: 12px; box-sizing: border-box; background: #f6f6f6; height: 23px; line-height: 23px; color: #333; font-size: 15px; font-family: "Noto Sans CJK SC", sans-serif; }
.moon { position: absolute; right: -2px; top: 5px; width: 14px; height: 14px; }
</style>
